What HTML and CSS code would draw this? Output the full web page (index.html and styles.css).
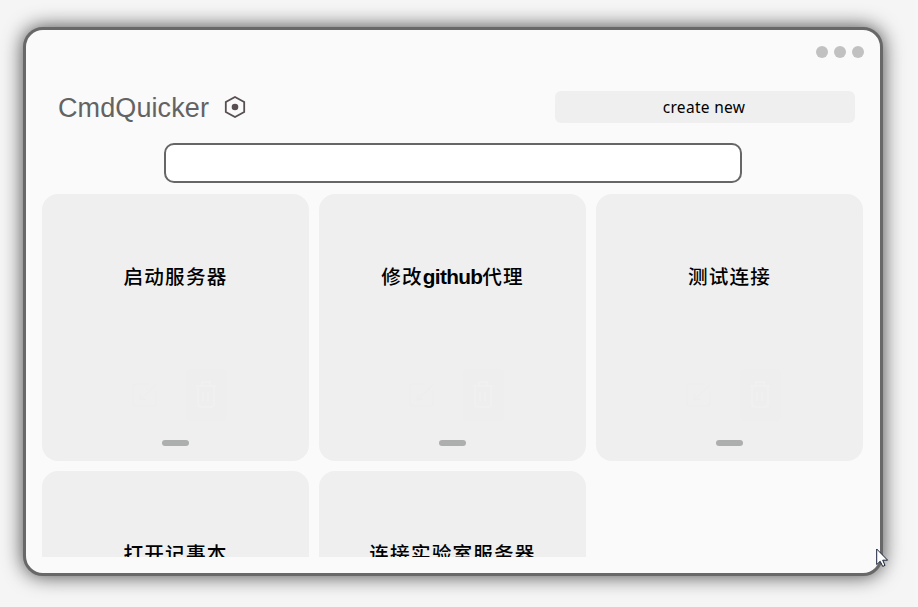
FILE: index.html
```html
<!DOCTYPE html>
<html lang="zh-CN">
<head>
<meta charset="utf-8">
<title>CmdQuicker</title>
<link rel="stylesheet" href="styles.css">
</head>
<body>
<svg class="symbols" width="0" height="0">
  <symbol id="edit" viewBox="0 0 26 26"><path d="M17 2H4Q1 2 1 5V21Q1 24 4 24H21Q24 24 24 21V9M8 18L24 3M8 18l1-6M8 18l6-1" fill="none" stroke="#ededed"/></symbol>
  <symbol id="trash" viewBox="0 0 22 28"><path d="M1 5H21M7 4V1H15V4M3 5V23Q3 26 6 26H16Q19 26 19 23V5M8 11V20M13 11V20" fill="none" stroke="#f0f0f0" stroke-width="2"/></symbol>
</svg>
<main class="window">
  <div class="dots"><i></i><i></i><i></i></div>
  <header class="header">
    <h1>CmdQuicker</h1>
    <svg class="logo" viewBox="0 0 22 22" width="22" height="22"><path d="M11 1L20.2 6V16L11 21L1.8 16V6Z" fill="none" stroke="#574f50" stroke-width="1.8"/><circle cx="11" cy="11" r="3.3" fill="#574f50"/></svg>
    <button class="create">create new</button>
  </header>
  <input class="search" type="text" aria-label="search">
  <section class="cards">
    <article class="card"><h2>启动服务器</h2><div class="actions"><svg class="edit"><use href="#edit"/></svg><span class="delete"><svg><use href="#trash"/></svg></span></div><span class="handle"></span></article>
    <article class="card"><h2>修改<span class="latin">github</span>代理</h2><div class="actions"><svg class="edit"><use href="#edit"/></svg><span class="delete"><svg><use href="#trash"/></svg></span></div><span class="handle"></span></article>
    <article class="card"><h2>测试连接</h2><div class="actions"><svg class="edit"><use href="#edit"/></svg><span class="delete"><svg><use href="#trash"/></svg></span></div><span class="handle"></span></article>
    <article class="card"><h2>打开记事本</h2></article>
    <article class="card"><h2>连接实验室服务器</h2></article>
  </section>
</main>
<svg class="cursor" viewBox="0 0 13 20" width="13" height="20"><path d="M.7 1V16.6L4.2 13.3L6.7 18.4L9 17.4L6.7 12.2H11.6Z" fill="#fff" stroke="#17203a"/></svg>
</body>
</html>
```

FILE: styles.css
```css
* { box-sizing: border-box; }
body {
  margin: 0;
  height: 607px;
  padding: 27px 35px 0 23px;
  overflow: hidden;
  background: #f5f5f5;
  font-family: "Liberation Sans", "Noto Sans CJK SC", sans-serif;
}
.symbols { position: absolute; }
.window {
  width: 860px;
  height: 549px;
  border: 3px solid #686868;
  border-radius: 20px;
  background: #fafafa;
  box-shadow: 0 0 20px #444;
}
.dots {
  display: flex;
  justify-content: flex-end;
  gap: 6px;
  padding: 16px 16px 0 0;
}
.dots i {
  width: 12px;
  height: 12px;
  border-radius: 50%;
  background: #c1c1c1;
}
.header {
  display: flex;
  align-items: center;
  height: 32px;
  margin-top: 33px;
  padding: 0 25px 0 32px;
}
h1 {
  margin: 2px 0 0;
  width: 166px;
  color: #636363;
  font-size: 27px;
  font-weight: 400;
  line-height: 32px;
  letter-spacing: .1px;
}
.create {
  width: 300px;
  height: 32px;
  margin-left: auto;
  padding: 0 2px 0 0;
  border: 0;
  border-radius: 6px;
  background: #efefef;
  color: #000;
  font: 15.5px/32px "Noto Sans", sans-serif;
  letter-spacing: .3px;
}
.search {
  display: block;
  width: 578px;
  height: 40px;
  margin: 20px 0 11px 138px;
  border: 2px solid #666;
  border-radius: 10px;
  background: #fff;
}
.cards {
  display: grid;
  grid-template-columns: repeat(3, 267px);
  grid-auto-rows: 267px;
  gap: 10px;
  height: 363px;
  margin-left: 16px;
  overflow: hidden;
}
.card {
  display: flex;
  flex-direction: column;
  align-items: center;
  border-radius: 16px;
  background: #efefef;
}
h2 {
  margin: 68px 0 0;
  color: #000;
  font-size: 19.6px;
  font-weight: 500;
  letter-spacing: 1.2px;
  line-height: 30px;
  white-space: nowrap;
}
.latin {
  font-size: 20.8px;
  font-weight: 700;
  letter-spacing: -.7px;
}
.actions {
  display: flex;
  align-items: center;
  gap: 28px;
  margin: 77px 0 0 7px;
}
.edit { width: 26px; height: 26px; }
.delete {
  display: flex;
  align-items: center;
  justify-content: center;
  width: 41px;
  height: 52px;
  border-radius: 5px;
  background: #eee;
}
.delete svg { width: 22px; height: 28px; }
.handle {
  width: 27px;
  height: 6px;
  margin-top: 19px;
  border-radius: 3px;
  background: #adafae;
}
.cursor {
  position: absolute;
  left: 876px;
  top: 548px;
}
```
